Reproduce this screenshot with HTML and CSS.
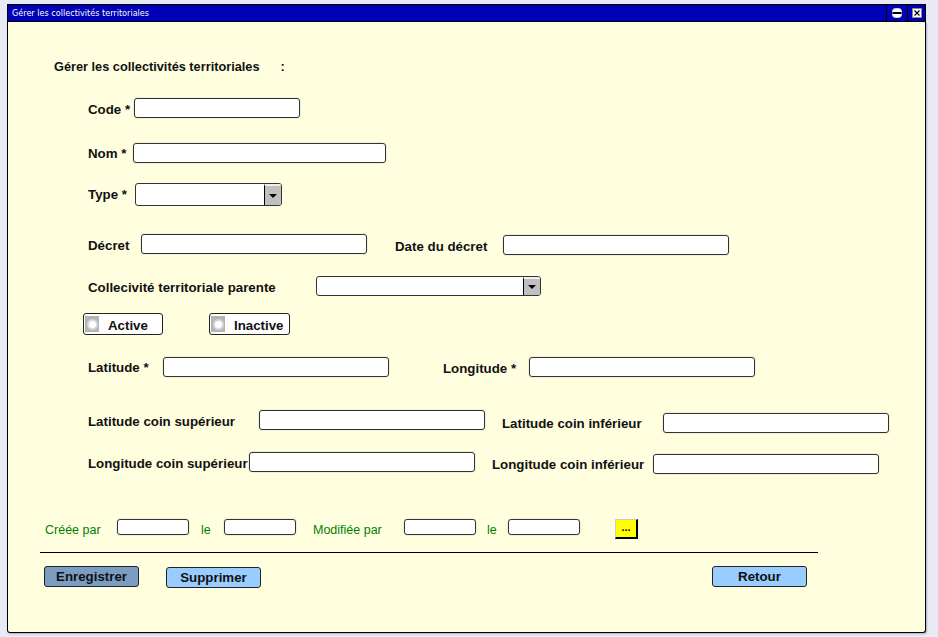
FILE: index.html
```html
<!DOCTYPE html>
<html lang="fr">
<head>
<meta charset="utf-8">
<title>Gérer les collectivités territoriales</title>
<link rel="stylesheet" href="styles.css">
</head>
<body>
<div class="window">
  <div class="titlebar">
    <span class="title">Gérer les collectivités territoriales</span>
    <span class="tb-btn tb-min">
      <svg width="10" height="10" viewBox="0 0 10 10"><rect x="0.5" y="0.5" width="9" height="9" rx="3" fill="#fff" stroke="#d8d8d8"/><rect x="0.5" y="4" width="9" height="2" fill="#000"/></svg>
    </span>
    <span class="tb-btn tb-close">
      <svg width="10" height="10" viewBox="0 0 10 10"><rect x="0.5" y="0.5" width="9" height="9" fill="#fff" stroke="#888"/><path d="M2.5 2.5 L7.5 7.5 M7.5 2.5 L2.5 7.5" stroke="#000" stroke-width="1.2"/></svg>
    </span>
  </div>
  <div class="panel">
    <div class="heading">Gérer les collectivités territoriales<span class="colon">:</span></div>

    <div class="row r-code">
      <label class="lbl w46 low">Code *</label>
      <span class="field w166"></span>
    </div>

    <div class="row r-nom">
      <label class="lbl w45">Nom *</label>
      <span class="field w253"></span>
    </div>

    <div class="row r-type">
      <label class="lbl w47 mid">Type *</label>
      <span class="select w147 h23"><span class="sel-btn"><span class="tri"></span></span></span>
    </div>

    <div class="row r-decret">
      <label class="lbl w53">Décret</label>
      <span class="field w226 top"></span>
      <label class="lbl w108 ml28 low">Date du décret</label>
      <span class="field w226 bottom"></span>
    </div>

    <div class="row r-parent">
      <label class="lbl w228 low">Collecivité territoriale parente</label>
      <span class="select w225"><span class="sel-btn"><span class="tri"></span></span></span>
    </div>

    <div class="row r-radio">
      <span class="radio w80"><span class="radio-ico"><span class="circle"></span></span><span class="radio-txt">Active</span></span>
      <span class="radio w81 ml46"><span class="radio-ico"><span class="circle"></span></span><span class="radio-txt">Inactive</span></span>
    </div>

    <div class="row r-lat">
      <label class="lbl w75">Latitude *</label>
      <span class="field w226"></span>
      <label class="lbl w86 ml54 low">Longitude *</label>
      <span class="field w226"></span>
    </div>

    <div class="row r-latcoin">
      <label class="lbl w171 mid">Latitude coin supérieur</label>
      <span class="field w226 top"></span>
      <label class="lbl w161 ml17 low">Latitude coin inférieur</label>
      <span class="field w226 bottom"></span>
    </div>

    <div class="row r-longcoin">
      <label class="lbl w161 mid">Longitude coin supérieur</label>
      <span class="field w226 top"></span>
      <label class="lbl w161 ml17 low">Longitude coin inférieur</label>
      <span class="field w226 bottom"></span>
    </div>

    <div class="row r-audit">
      <span class="audit w72">Créée par</span>
      <span class="field small w72"></span>
      <span class="audit w23 ml12">le</span>
      <span class="field small w72"></span>
      <span class="audit w91 ml17">Modifiée par</span>
      <span class="field small w72"></span>
      <span class="audit w21 ml11">le</span>
      <span class="field small w72"></span>
      <span class="more ml35">...</span>
    </div>

    <div class="sep"></div>

    <div class="row r-buttons">
      <span class="btn btn-dark">Enregistrer</span>
      <span class="btn btn-light ml27 low1">Supprimer</span>
      <span class="btn btn-light ml451">Retour</span>
    </div>
  </div>
</div>
</body>
</html>
```

FILE: styles.css
```css
html, body {
  margin: 0;
  padding: 0;
}
body {
  background: #e9ebf4;
  width: 938px;
  height: 637px;
  overflow: hidden;
  font-family: "Liberation Sans", Arial, sans-serif;
}
.window {
  margin: 4px 0 0 7px;
  width: 919px;
}
.titlebar {
  box-sizing: border-box;
  height: 18px;
  background: #0000b8;
  border: 1px solid #000;
  display: flex;
  align-items: stretch;
}
.title {
  flex: 1;
  color: #fff;
  font-family: "DejaVu Sans Condensed", "DejaVu Sans", sans-serif;
  font-size: 9px;
  line-height: 16px;
  padding-left: 4px;
  letter-spacing: 0;
}
.tb-btn {
  border-left: 1px solid #000;
  display: flex;
  align-items: center;
  justify-content: center;
}
.tb-btn svg { display: block; }
.tb-min { width: 20px; }
.tb-close { width: 17px; }

.panel {
  box-sizing: border-box;
  height: 611px;
  background: #ffffe0;
  border: 1px solid #000;
  border-top: none;
  border-radius: 0 0 3px 3px;
  box-shadow: 1px 1px 2px rgba(60, 60, 90, 0.35);
  padding-top: 37px;
}
.heading {
  margin-left: 46px;
  font-size: 12.75px;
  font-weight: bold;
  line-height: 16px;
  height: 16px;
  color: #111;
}
.colon { margin-left: 21px; }

.row {
  display: flex;
  align-items: center;
  margin-left: 80px;
}
.lbl {
  font-size: 13.3px;
  font-weight: bold;
  color: #111;
  line-height: 16px;
  white-space: nowrap;
  flex: none;
  padding-top: 2px;
}
.lbl.mid { padding-top: 1px; }
.lbl.low { padding-top: 4px; }

.field {
  box-sizing: border-box;
  height: 20px;
  background: #fff;
  border: 1px solid #333;
  border-radius: 3px;
  flex: none;
  box-shadow: 0 0 0 1px rgba(0, 0, 0, 0.06);
}
.field.top { align-self: flex-start; }
.field.bottom { align-self: flex-end; }
.field.small { height: 16px; align-self: flex-start; }

.select {
  box-sizing: border-box;
  height: 20px;
  background: #fff;
  border: 1px solid #333;
  border-radius: 3px;
  flex: none;
  display: flex;
  justify-content: flex-end;
}
.select.h23 { height: 23px; }
.sel-btn {
  box-sizing: border-box;
  width: 17px;
  background: #c0c0c0;
  border-left: 1px solid #000;
  border-top: 2px solid #f0f0f0;
  border-radius: 0 2px 2px 0;
  display: flex;
  align-items: center;
  justify-content: center;
}
.tri {
  width: 0;
  height: 0;
  border-left: 4px solid transparent;
  border-right: 4px solid transparent;
  border-top: 4px solid #000;
}

.radio {
  box-sizing: border-box;
  height: 22px;
  background: #fff;
  border: 1px solid #222;
  border-radius: 3px;
  display: flex;
  align-items: center;
  flex: none;
}
.radio-ico {
  width: 14px;
  height: 16px;
  background: #b4b4b4;
  margin-left: 1px;
  display: flex;
  align-items: center;
  justify-content: center;
}
.circle {
  box-sizing: border-box;
  width: 11px;
  height: 11px;
  border-radius: 50%;
  border: 2px solid #d8d8d8;
  background: #fff;
}
.radio-txt {
  margin-left: 9px;
  font-size: 13.3px;
  font-weight: bold;
  color: #111;
  padding-top: 2px;
}

.audit {
  font-size: 12.5px;
  color: #008000;
  line-height: 16px;
  white-space: nowrap;
  flex: none;
  padding-top: 2px;
}
.more {
  box-sizing: border-box;
  width: 23px;
  height: 20px;
  background: #ffff00;
  border-top: 1px solid #ccc;
  border-left: 1px solid #ccc;
  border-right: 2px solid #000;
  border-bottom: 2px solid #000;
  font-size: 11px;
  font-weight: bold;
  line-height: 14px;
  text-align: center;
  color: #000;
  flex: none;
}

.sep {
  margin: 13px 0 0 32px;
  width: 778px;
  border-top: 1px solid #000;
}

.btn {
  box-sizing: border-box;
  width: 95px;
  height: 21px;
  border: 1px solid #222;
  border-radius: 3px;
  font-size: 13.3px;
  font-weight: bold;
  color: #111;
  text-align: center;
  line-height: 19px;
  flex: none;
}
.btn-dark { background: #7b9dc2; }
.btn-light { background: #99ccff; }
.btn.low1 { align-self: flex-end; }

/* vertical spacing */
.r-code { margin-top: 23px; height: 20px; }
.r-nom { margin-top: 25px; height: 20px; }
.r-type { margin-top: 20px; height: 23px; }
.r-decret { margin-top: 28px; height: 21px; }
.r-parent { margin-top: 21px; height: 20px; }
.r-radio { margin-top: 17px; height: 22px; margin-left: 75px; }
.r-lat { margin-top: 22px; height: 20px; }
.r-latcoin { margin-top: 33px; height: 23px; }
.r-longcoin { margin-top: 19px; height: 22px; }
.r-audit { margin-top: 45px; height: 20px; margin-left: 37px; }
.r-buttons { margin-top: 13px; height: 22px; margin-left: 36px; align-items: flex-start; }

/* widths */
.w21 { width: 21px; }
.w23 { width: 23px; }
.w45 { width: 45px; }
.w46 { width: 46px; }
.w47 { width: 47px; }
.w53 { width: 53px; }
.w72 { width: 72px; }
.w75 { width: 75px; }
.w80 { width: 80px; }
.w81 { width: 81px; }
.w86 { width: 86px; }
.w91 { width: 91px; }
.w108 { width: 108px; }
.w147 { width: 147px; }
.w161 { width: 161px; }
.w166 { width: 166px; }
.w171 { width: 171px; }
.w225 { width: 225px; }
.w226 { width: 226px; }
.w228 { width: 228px; }
.w253 { width: 253px; }

/* gaps */
.ml11 { margin-left: 11px; }
.ml12 { margin-left: 12px; }
.ml17 { margin-left: 17px; }
.ml27 { margin-left: 27px; }
.ml28 { margin-left: 28px; }
.ml35 { margin-left: 35px; }
.ml46 { margin-left: 46px; }
.ml54 { margin-left: 54px; }
.ml451 { margin-left: 451px; }
```
